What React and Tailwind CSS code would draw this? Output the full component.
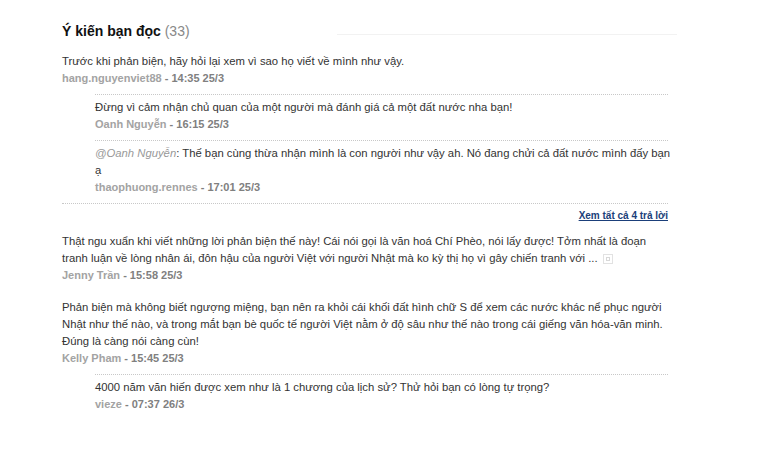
import React from 'react';

const comments = [
  {
    id: 1,
    lines: ['Trước khi phản biện, hãy hỏi lại xem vì sao họ viết về mình như vậy.'],
    name: 'hang.nguyenviet88',
    time: '14:35 25/3',
    replies: [
      {
        id: 11,
        lines: ['Đừng vì cảm nhận chủ quan của một người mà đánh giá cả một đất nước nha bạn!'],
        name: 'Oanh Nguyễn',
        time: '16:15 25/3',
      },
      {
        id: 12,
        mention: '@Oanh Nguyễn',
        lines: [': Thế bạn cùng thừa nhận mình là con người như vậy ah. Nó đang chửi cả đất nước mình đấy bạn', 'ạ'],
        name: 'thaophuong.rennes',
        time: '17:01 25/3',
      },
    ],
    more: 'Xem tất cả 4 trả lời',
  },
  {
    id: 2,
    lines: [
      'Thật ngu xuẩn khi viết những lời phản biện thế này! Cái nói gọi là văn hoá Chí Phèo, nói lấy được! Tởm nhất là đoạn',
      'tranh luận về lòng nhân ái, đôn hậu của người Việt với người Nhật mà ko kỳ thị họ vì gây chiến tranh với ...',
    ],
    expand: true,
    name: 'Jenny Trần',
    time: '15:58 25/3',
    replies: [],
  },
  {
    id: 3,
    lines: [
      'Phản biện mà không biết ngượng miệng, bạn nên ra khỏi cái khối đất hình chữ S để xem các nước khác nể phục người',
      'Nhật như thế nào, và trong mắt bạn bè quốc tế người Việt nằm ở độ sâu như thế nào trong cái giếng văn hóa-văn minh.',
      'Đúng là càng nói càng cùn!',
    ],
    name: 'Kelly Pham',
    time: '15:45 25/3',
    replies: [
      {
        id: 31,
        lines: ['4000 năm văn hiến được xem như là 1 chương của lịch sử? Thử hỏi bạn có lòng tự trọng?'],
        name: 'vieze',
        time: '07:37 26/3',
      },
    ],
  },
];

function Meta({ name, time }) {
  return (
    <div className="text-[11px] font-bold leading-[17px] whitespace-nowrap">
      <span className="text-[#a3a3a3]">{name}</span>
      <span className="text-[#808080]"> - {time}</span>
    </div>
  );
}

function Body({ item }) {
  return (
    <div className="text-[11.3px] leading-[17px] text-[#333] whitespace-nowrap">
      {item.lines.map((line, i) => (
        <div key={i} className="flex items-center">
          {i === 0 && item.mention && <span className="italic text-[#999]">{item.mention}</span>}
          <span>{line}</span>
          {item.expand && i === item.lines.length - 1 && (
            <span className="ml-[5px] inline-flex h-[10px] w-[10px] items-center justify-center border border-[#e2e2e2]">
              <span className="h-[4px] w-[4px] border border-[#d8d8d8]" />
            </span>
          )}
        </div>
      ))}
    </div>
  );
}

export default function App() {
  return (
    <div className="min-h-screen bg-white font-['Liberation_Sans',Arial,sans-serif]">
      <div className="ml-[62px] w-[615px] pt-[22px]">
        {/* header */}
        <div className="flex items-start">
          <h2 className="text-[14px] leading-[18px] font-bold text-[#111] whitespace-nowrap">
            Ý kiến bạn đọc <span className="font-normal text-[#888]">(33)</span>
          </h2>
          <div className="ml-auto mt-[12px] h-px w-[340px] bg-[#f2f2f2]" />
        </div>

        <div className="w-[606px] mt-[13px]">
          {comments.map((c, idx) => (
            <div key={c.id} className={idx === 0 ? '' : idx === 1 ? 'mt-[9px]' : 'mt-[15px]'}>
              <Body item={c} />
              <Meta name={c.name} time={c.time} />

              {c.replies.length > 0 && (
                <div className="ml-[33px] mt-[7px]">
                  {c.replies.map((r) => (
                    <div key={r.id} className="border-t border-dotted border-[#c8c8c8] pt-[4px] pb-[7px]">
                      <Body item={r} />
                      <Meta name={r.name} time={r.time} />
                    </div>
                  ))}
                </div>
              )}

              {c.more && (
                <div className="border-t border-dotted border-[#c8c8c8] pt-[4px] text-right text-[10px] leading-[16px]">
                  <a href="#" className="font-bold text-[#1b3f7a] underline">
                    {c.more}
                  </a>
                </div>
              )}
            </div>
          ))}
        </div>
      </div>
    </div>
  );
}
